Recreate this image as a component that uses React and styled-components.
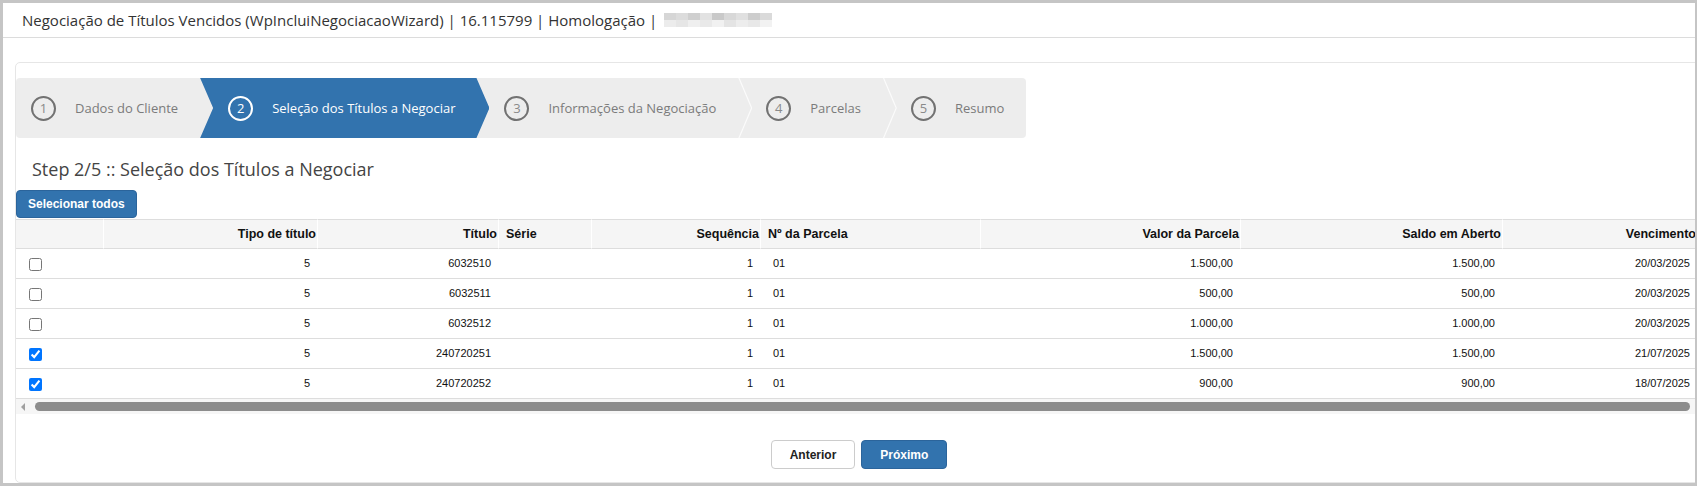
import React from "react";
import styled, { createGlobalStyle, css } from "styled-components";

const azul = "#3273ae";

const GlobalStyle = createGlobalStyle`
  body {
    margin: 0;
    background: #fff;
    font-family: "Open Sans", "Noto Sans", sans-serif;
  }
`;

const Frame = styled.div`
  width: 1697px;
  height: 486px;
  box-sizing: border-box;
  border: 3px solid #c5c5c5;
  border-right-width: 2px;
  background: #fff;
  overflow: hidden;
`;

const TitleBar = styled.div`
  display: flex;
  align-items: center;
  height: 34px;
  padding-left: 19px;
  border-bottom: 1px solid #dcdcdc;
  font-size: 15px;
  color: #333;
  white-space: nowrap;
`;

// bloco borrado no fim do titulo
const Mosaic = styled.span`
  display: grid;
  grid-template-columns: repeat(9, 12px);
  grid-auto-rows: 7px;
  margin-left: 7px;
`;

const MosaicCell = styled.span`
  background: ${({ $c }) => $c};
`;

const Panel = styled.div`
  margin: 24px -8px 0 12px;
  border: 1px solid #e6e6e6;
  border-radius: 5px;
  padding: 15px 0 13px;
`;

const Wizard = styled.div`
  display: flex;
  width: max-content;
  height: 60px;
  background: #ededed;
  border-radius: 4px;
  overflow: hidden;
`;

const Step = styled.div`
  position: relative;
  display: flex;
  align-items: center;
  gap: 19px;
  padding: 0 22px 0 ${({ $first }) => ($first ? 15 : 28)}px;
  font-size: 13px;
  color: ${({ $active }) => ($active ? "#fff" : "#7b7b7b")};
  white-space: nowrap;

  ${({ $active }) =>
    $active &&
    css`
      background: ${azul};
      z-index: 1;
      padding-right: 34px;
      margin-right: -13px;
      clip-path: polygon(
        0 0,
        calc(100% - 13px) 0,
        100% 50%,
        calc(100% - 13px) 100%,
        0 100%,
        13px 50%
      );
    `}

  ${({ $sep }) =>
    $sep &&
    css`
      &::after {
        content: "";
        position: absolute;
        left: 100%;
        top: 0;
        bottom: 0;
        width: 14px;
        background: #fbfbfb;
        clip-path: polygon(0 0, 1.3px 0, 14px 50%, 1.3px 100%, 0 100%, 12.7px 50%);
      }
    `}
`;

const StepNumber = styled.span`
  display: flex;
  align-items: center;
  justify-content: center;
  width: 25px;
  height: 25px;
  box-sizing: border-box;
  border: 2px solid ${({ $active }) => ($active ? "#fff" : "#727272")};
  border-radius: 50%;
  font-size: 13px;
  color: ${({ $active }) => ($active ? "#fff" : "#8a8a8a")};
`;

const Heading = styled.h2`
  margin: 20px 16px 10px;
  font-size: 18px;
  font-weight: 400;
  line-height: 22px;
  color: #444;
`;

const SelectAll = styled.button`
  display: block;
  height: 28px;
  padding: 0 11px;
  background: ${azul};
  border: 1px solid #2b649b;
  border-radius: 4px;
  color: #fff;
  font: bold 12px "Liberation Sans", Arial, sans-serif;
`;

const TableWrap = styled.div`
  margin-top: 1px;
  overflow: hidden;
`;

const Table = styled.table`
  width: 1681px;
  table-layout: fixed;
  border-collapse: separate;
  border-spacing: 0;
  font-family: "Liberation Sans", Arial, sans-serif;
  color: #111;
`;

const Col = styled.col`
  width: ${({ $w }) => $w}px;
`;

const Th = styled.th`
  padding: 0 ${({ $align }) => ($align === "right" ? "1px 0 7px" : "7px")};
  background: #f5f5f5;
  border-top: 1px solid #ddd;
  border-bottom: 1px solid #ddd;
  border-left: 1px solid #fff;
  text-align: ${({ $align }) => $align};
  font-size: 12.5px;
  font-weight: bold;
  line-height: 28px;
  white-space: nowrap;
  overflow: hidden;

  &:first-child {
    border-left: none;
  }
`;

const Td = styled.td`
  padding: 0 ${({ $align }) => ($align === "right" ? "7px" : "7px 0 13px")};
  border-bottom: 1px solid #ddd;
  text-align: ${({ $align }) => $align};
  font-size: 11px;
  line-height: 29px;
  white-space: nowrap;
`;

const CheckCell = styled.td`
  padding: 0 0 0 13px;
  border-bottom: 1px solid #ddd;
  line-height: 29px;
`;

const Check = styled.input`
  width: 13px;
  height: 13px;
  margin: 0;
  vertical-align: middle;
`;

const ScrollTrack = styled.div`
  display: flex;
  align-items: center;
  height: 15px;
  background: #f6f6f6;
`;

const ScrollArrow = styled.span`
  width: 0;
  height: 0;
  margin-left: 5px;
  border-top: 4px solid transparent;
  border-bottom: 4px solid transparent;
  border-right: 4px solid #a0a0a0;
`;

const ScrollThumb = styled.span`
  flex: 1;
  height: 9px;
  margin: 0 12px 0 10px;
  background: #8c8c8c;
  border-radius: 5px;
`;

const Footer = styled.div`
  display: flex;
  justify-content: center;
  gap: 6px;
  margin-top: 26px;
`;

const NavButton = styled.button`
  height: 29px;
  padding: 0 18px;
  border-radius: 4px;
  border: 1px solid ${({ $primary }) => ($primary ? "#2b649b" : "#ccc")};
  background: ${({ $primary }) => ($primary ? azul : "#fff")};
  color: ${({ $primary }) => ($primary ? "#fff" : "#222")};
  font: bold 12px "Liberation Sans", Arial, sans-serif;
`;

const passos = [
  "Dados do Cliente",
  "Seleção dos Títulos a Negociar",
  "Informações da Negociação",
  "Parcelas",
  "Resumo",
];
const ativo = 1;

const colunas = [
  { w: 87, label: "", align: "left" },
  { w: 214, label: "Tipo de título", align: "right" },
  { w: 181, label: "Título", align: "right" },
  { w: 93, label: "Série", align: "left" },
  { w: 169, label: "Sequência", align: "right" },
  { w: 220, label: "Nº da Parcela", align: "left" },
  { w: 260, label: "Valor da Parcela", align: "right" },
  { w: 262, label: "Saldo em Aberto", align: "right" },
  { w: 195, label: "Vencimento", align: "right" },
];

const titulos = [
  { sel: false, tipo: "5", titulo: "6032510", valor: "1.500,00", saldo: "1.500,00", venc: "20/03/2025" },
  { sel: false, tipo: "5", titulo: "6032511", valor: "500,00", saldo: "500,00", venc: "20/03/2025" },
  { sel: false, tipo: "5", titulo: "6032512", valor: "1.000,00", saldo: "1.000,00", venc: "20/03/2025" },
  { sel: true, tipo: "5", titulo: "240720251", valor: "1.500,00", saldo: "1.500,00", venc: "21/07/2025" },
  { sel: true, tipo: "5", titulo: "240720252", valor: "900,00", saldo: "900,00", venc: "18/07/2025" },
];

const mosaico = [
  "#d6d6d6", "#dcdcdc", "#cfcfcf", "#e2e2e2", "#c9c9c9", "#d8d8d8", "#e0e0e0", "#cdcdcd", "#dadada",
  "#ececec", "#e6e6e6", "#efefef", "#e9e9e9", "#f1f1f1", "#e4e4e4", "#ededed", "#e8e8e8", "#f2f2f2",
];

export default function App() {
  return (
    <>
      <GlobalStyle />
      <Frame>
        <TitleBar>
          Negociação de Títulos Vencidos (WpIncluiNegociacaoWizard) | 16.115799 | Homologação |
          <Mosaic>
            {mosaico.map((c, i) => (
              <MosaicCell key={i} $c={c} />
            ))}
          </Mosaic>
        </TitleBar>

        <Panel>
          <Wizard>
            {passos.map((nome, i) => (
              <Step
                key={nome}
                $first={i === 0}
                $active={i === ativo}
                $sep={i > ativo && i < passos.length - 1}
              >
                <StepNumber $active={i === ativo}>{i + 1}</StepNumber>
                {nome}
              </Step>
            ))}
          </Wizard>

          <Heading>Step 2/5 :: Seleção dos Títulos a Negociar</Heading>
          <SelectAll>Selecionar todos</SelectAll>

          <TableWrap>
            <Table>
              <colgroup>
                {colunas.map((c, i) => (
                  <Col key={i} $w={c.w} />
                ))}
              </colgroup>
              <thead>
                <tr>
                  {colunas.map((c, i) => (
                    <Th key={i} $align={c.align}>
                      {c.label}
                    </Th>
                  ))}
                </tr>
              </thead>
              <tbody>
                {titulos.map((t) => (
                  <tr key={t.titulo}>
                    <CheckCell>
                      <Check type="checkbox" checked={t.sel} readOnly />
                    </CheckCell>
                    <Td $align="right">{t.tipo}</Td>
                    <Td $align="right">{t.titulo}</Td>
                    <Td $align="left"></Td>
                    <Td $align="right">1</Td>
                    <Td $align="left">01</Td>
                    <Td $align="right">{t.valor}</Td>
                    <Td $align="right">{t.saldo}</Td>
                    <Td $align="right">{t.venc}</Td>
                  </tr>
                ))}
              </tbody>
            </Table>
          </TableWrap>

          <ScrollTrack>
            <ScrollArrow />
            <ScrollThumb />
          </ScrollTrack>

          <Footer>
            <NavButton>Anterior</NavButton>
            <NavButton $primary>Próximo</NavButton>
          </Footer>
        </Panel>
      </Frame>
    </>
  );
}
